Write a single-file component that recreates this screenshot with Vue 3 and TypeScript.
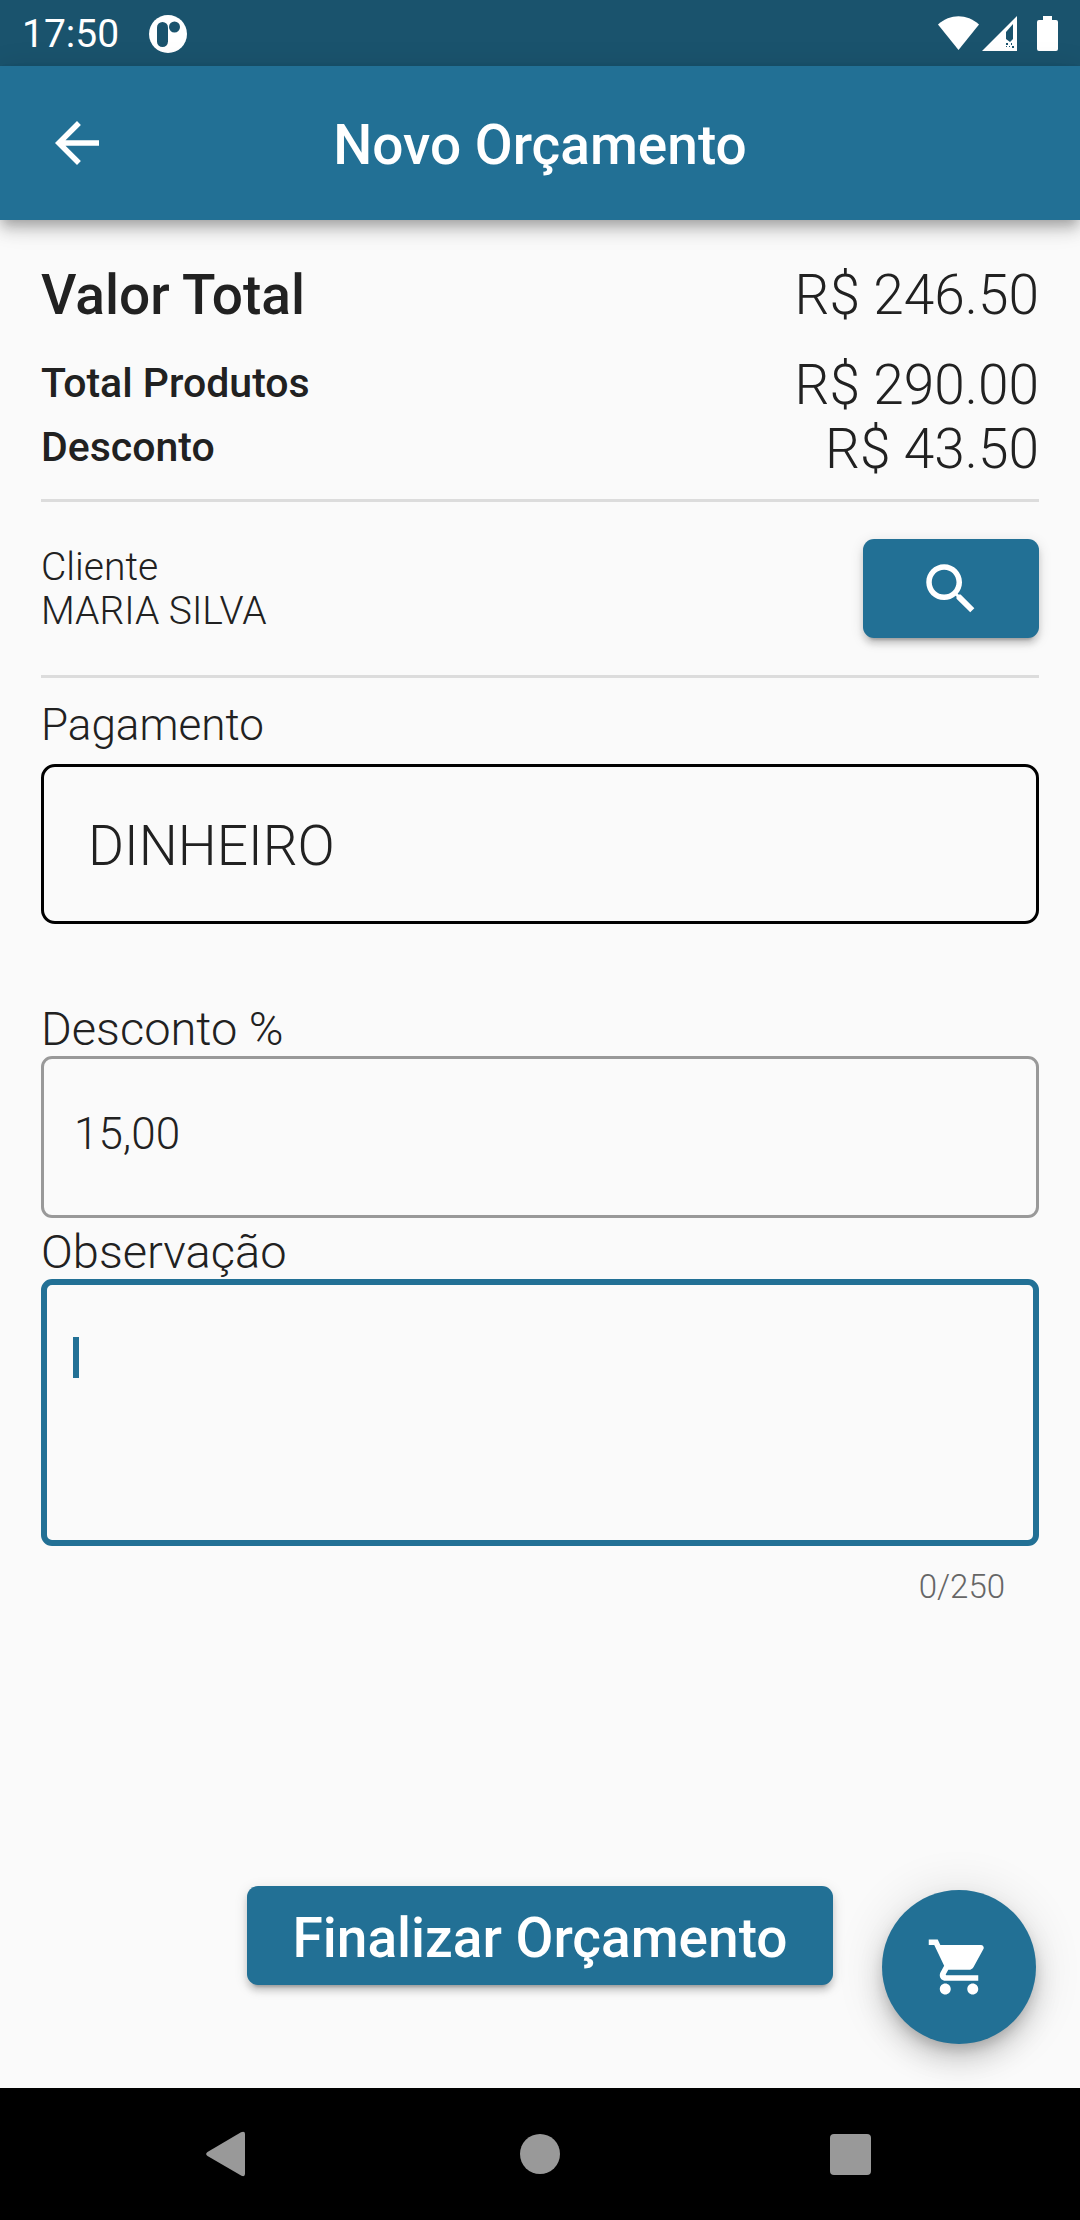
<script setup lang="ts">
import { computed, ref } from 'vue'

const MAX_NOTE = 250

const total = ref(246.5)
const products = ref(290)
const discount = ref(43.5)
const client = ref('MARIA SILVA')
const payment = ref('DINHEIRO')
const discountPercent = ref('15,00')
const note = ref('')

const counter = computed<string>(() => `${note.value.length}/${MAX_NOTE}`)

function money(value: number): string {
  return `R$ ${value.toFixed(2)}`
}
</script>

<template>
  <div class="screen">
    <div class="status-bar">
      <span class="clock">17:50</span>
      <svg class="app-badge" width="40" height="40" viewBox="0 0 40 40" aria-hidden="true">
        <circle cx="20" cy="20" r="19" fill="#fff" />
        <rect x="9" y="8" width="11" height="25" rx="5.5" fill="#1a536d" />
        <circle cx="26.5" cy="13" r="5.5" fill="#1a536d" />
      </svg>
      <div class="status-icons">
        <svg width="122" height="38" viewBox="0 0 122 38" fill="#fff" aria-hidden="true">
          <path d="M0 9.500C12-1.500 29-1.500 41 9.500L20.500 35Z" />
          <path fill-rule="evenodd" d="M44 36L79 1V36ZM68 17V24L72 27L75 24V9Z" />
          <path fill="#1a536d" d="M68 28h2v2h-2zM68 31h1v1h-1zM73 28h1v2h-1zM71 31h1v1h-1zM74 31h2v2h-2z" />
          <path d="M105 1h9v4h4q2 0 2 2v27q0 2-2 2h-17q-2 0-2-2V7q0-2 2-2h4z" />
        </svg>
      </div>
    </div>

    <header class="app-bar">
      <button class="back" type="button" aria-label="Voltar">
        <svg width="66" height="66" viewBox="0 0 24 24" fill="#fff">
          <path d="M20 11H7.830l5.590-5.590L12 4l-8 8 8 8 1.410-1.410L7.830 13H20v-2z" />
        </svg>
      </button>
      <h1>Novo Orçamento</h1>
    </header>

    <main class="content">
      <dl class="totals">
        <div class="row grand">
          <dt>Valor Total</dt>
          <dd>{{ money(total) }}</dd>
        </div>
        <div class="row">
          <dt>Total Produtos</dt>
          <dd>{{ money(products) }}</dd>
        </div>
        <div class="row">
          <dt>Desconto</dt>
          <dd>{{ money(discount) }}</dd>
        </div>
      </dl>

      <section class="client">
        <div class="client-text">
          <div>Cliente</div>
          <div>{{ client }}</div>
        </div>
        <button class="raised search" type="button" aria-label="Buscar cliente">
          <svg width="66" height="66" viewBox="0 0 24 24" fill="#fff">
            <path d="M15.500 14h-.79l-.28-.27C15.410 12.590 16 11.110 16 9.500 16 5.910 13.090 3 9.500 3S3 5.910 3 9.500 5.910 16 9.500 16c1.610 0 3.090-.59 4.230-1.570l.27.28v.79l5 4.990L20.490 19l-4.990-5zm-6 0C7.010 14 5 11.990 5 9.500S7.010 5 9.500 5 14 7.010 14 9.500 11.990 14 9.500 14z" />
          </svg>
        </button>
      </section>

      <label class="payment-label" for="payment">Pagamento</label>
      <select id="payment" v-model="payment" class="box payment">
        <option>DINHEIRO</option>
      </select>

      <label class="field-label discount-label" for="discount">Desconto %</label>
      <input id="discount" v-model="discountPercent" class="box discount" type="text" inputmode="decimal" />

      <label class="field-label note-label" for="note">Observação</label>
      <div class="note-wrap">
        <textarea id="note" v-model="note" class="box note" :maxlength="MAX_NOTE"></textarea>
        <span v-if="note.length === 0" class="caret" aria-hidden="true"></span>
      </div>
      <div class="counter">{{ counter }}</div>

      <button class="raised finish" type="button">Finalizar Orçamento</button>

      <button class="fab" type="button" aria-label="Carrinho">
        <svg width="66" height="66" viewBox="0 0 24 24" fill="#fff">
          <path d="M7 18c-1.100 0-1.990.9-1.990 2S5.900 22 7 22s2-.9 2-2-.9-2-2-2zM1 2v2h2l3.600 7.590-1.350 2.450c-.16.28-.25.61-.25.96 0 1.100.9 2 2 2h12v-2H7.420c-.14 0-.25-.11-.25-.25l.03-.12.9-1.630h7.450c.75 0 1.410-.41 1.750-1.030l3.580-6.490c.08-.14.12-.31.12-.48 0-.55-.45-1-1-1H5.210l-.94-2H1zm16 16c-1.100 0-1.990.9-1.990 2s.89 2 1.990 2 2-.9 2-2-.9-2-2-2z" />
        </svg>
      </button>
    </main>

    <nav class="nav-bar" aria-label="Sistema">
      <button type="button" aria-label="Voltar">
        <svg width="48" height="48" viewBox="0 0 48 48" fill="#999">
          <path d="M3.500 22L37 2.300Q41 .8 41 4V44Q41 47 37.500 45.800L3.500 26Q.8 24 3.500 22Z" />
        </svg>
      </button>
      <button type="button" aria-label="Início">
        <svg width="48" height="48" viewBox="0 0 48 48" fill="#999"><circle cx="24" cy="24" r="20" /></svg>
      </button>
      <button type="button" aria-label="Recentes">
        <svg width="48" height="48" viewBox="0 0 48 48" fill="#999"><rect x="2" y="4" width="41" height="41" rx="4" /></svg>
      </button>
    </nav>
  </div>
</template>

<style>
body {
  margin: 0;
  background: #fafafa;
}
</style>

<style scoped>
.screen {
  display: flex;
  flex-direction: column;
  min-height: 100vh;
  background: #fafafa;
  color: #212121;
  font-family: Roboto, "Liberation Sans", sans-serif;
  font-weight: 300;
}

button {
  display: flex;
  align-items: center;
  justify-content: center;
  padding: 0;
  border: 0;
  background: none;
  color: #fff;
  font-family: inherit;
  cursor: pointer;
}

.status-bar {
  box-sizing: border-box;
  display: flex;
  align-items: center;
  height: 66px;
  padding: 2px 20px 0 22px;
  background: #1a536d;
  color: #fff;
}

.clock {
  font-size: 39px;
  font-weight: 400;
  line-height: 64px;
}

.app-badge {
  margin-left: 29px;
}

.status-icons {
  display: flex;
  margin-left: auto;
}

.app-bar {
  position: relative;
  z-index: 1;
  display: grid;
  grid-template-columns: 154px 1fr 154px;
  align-items: center;
  height: 154px;
  background: #227095;
  box-shadow:
    0 6px 11px -3px rgba(0, 0, 0, 0.2),
    0 11px 14px 0 rgba(0, 0, 0, 0.14),
    0 3px 28px 0 rgba(0, 0, 0, 0.12);
}

.back {
  height: 154px;
}

h1 {
  margin: 0;
  padding-top: 4px;
  color: #fff;
  font-size: 55px;
  font-weight: 500;
  line-height: 64px;
  text-align: center;
}

.content {
  position: relative;
  display: flex;
  flex: 1;
  flex-direction: column;
  padding: 43px 41px 103px;
}

.totals {
  margin: 0;
  padding-bottom: 18px;
  border-bottom: 3px solid #dcdcdc;
}

.row {
  display: flex;
  align-items: center;
  justify-content: space-between;
}

.row dt {
  padding-bottom: 4px;
  font-size: 41px;
  font-weight: 500;
  line-height: 48px;
}

.row dd {
  margin: 0;
  font-size: 55px;
  line-height: 64px;
}

.grand {
  margin-bottom: 26px;
}

.row.grand dt {
  padding-bottom: 0;
  font-size: 55px;
  line-height: 64px;
}

.client {
  display: flex;
  align-items: center;
  justify-content: space-between;
  padding: 37px 0;
  border-bottom: 3px solid #dcdcdc;
}

.client-text {
  font-size: 39px;
  line-height: 44px;
}

.raised {
  box-sizing: border-box;
  height: 99px;
  border-radius: 11px;
  background: #227095;
  box-shadow:
    0 8px 3px -6px rgba(0, 0, 0, 0.2),
    0 6px 6px 0 rgba(0, 0, 0, 0.14),
    0 3px 14px 0 rgba(0, 0, 0, 0.12);
}

.search {
  width: 176px;
}

.payment-label {
  margin: 21px 0 13px;
  font-size: 44px;
  line-height: 52px;
}

.box {
  box-sizing: border-box;
  width: 100%;
  margin: 0;
  background: transparent;
  color: #212121;
  font-family: inherit;
  font-weight: 300;
  outline: none;
}

.payment {
  height: 160px;
  padding: 4px 44px 0;
  border: 3px solid #000;
  border-radius: 14px;
  appearance: none;
  font-size: 55px;
}

.field-label {
  font-size: 47px;
  line-height: 55px;
}

.discount-label {
  margin-top: 77px;
}

.discount {
  height: 162px;
  padding: 0 30px 6px;
  border: 3px solid #999;
  border-radius: 11px;
  font-size: 44px;
}

.note-label {
  margin-top: 6px;
}

.note-wrap {
  position: relative;
  display: flex;
}

.note {
  height: 267px;
  padding: 48px 27px;
  border: 6px solid #227095;
  border-radius: 11px;
  caret-color: transparent;
  font-size: 44px;
  line-height: 52px;
  resize: none;
}

.caret {
  position: absolute;
  top: 58px;
  left: 32px;
  width: 6px;
  height: 41px;
  background: #227095;
}

.counter {
  margin-top: 21px;
  padding-right: 34px;
  color: #666;
  font-size: 33px;
  line-height: 39px;
  text-align: right;
}

.finish {
  align-self: center;
  margin-top: auto;
  padding: 4px 45px 0;
  font-size: 55px;
  font-weight: 500;
  line-height: 64px;
}

.fab {
  position: absolute;
  right: 44px;
  bottom: 44px;
  width: 154px;
  height: 154px;
  border-radius: 50%;
  background: #227095;
  box-shadow:
    0 8px 14px -3px rgba(0, 0, 0, 0.2),
    0 17px 28px 0 rgba(0, 0, 0, 0.14),
    0 3px 50px 0 rgba(0, 0, 0, 0.12);
}

.nav-bar {
  position: relative;
  display: grid;
  grid-template-columns: repeat(3, 1fr);
  height: 132px;
  padding: 0 72px;
  background: #000;
}
</style>
